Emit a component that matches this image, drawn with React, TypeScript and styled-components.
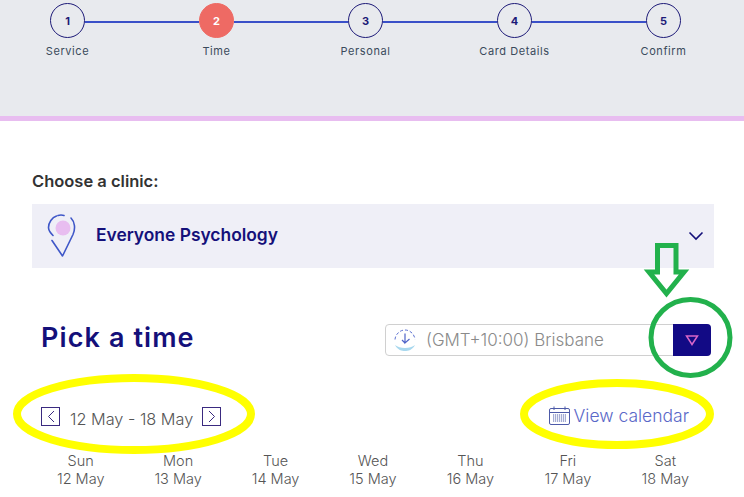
import { createGlobalStyle, styled } from 'styled-components';

const GlobalStyle = createGlobalStyle`
  html, body {
    margin: 0;
    padding: 0;
    background: #fff;
    font-family: Inter, "Liberation Sans", sans-serif;
  }
  #root {
    position: relative;
    width: 744px;
    height: 497px;
    overflow: hidden;
  }
`;

const steps = ['Service', 'Time', 'Personal', 'Card Details', 'Confirm'];
const days = [
  ['Sun', '12 May'],
  ['Mon', '13 May'],
  ['Tue', '14 May'],
  ['Wed', '15 May'],
  ['Thu', '16 May'],
  ['Fri', '17 May'],
  ['Sat', '18 May'],
];

export default function App() {
  return (
    <>
      <GlobalStyle />
      <Header>
        <Stepper>
          {steps.map((label, i) => (
            <StepGroup key={label} $last={i === steps.length - 1}>
              <Step>
                <Circle $active={i === 1}>{i + 1}</Circle>
                <StepLabel>{label}</StepLabel>
              </Step>
              {i < steps.length - 1 && <Connector />}
            </StepGroup>
          ))}
        </Stepper>
      </Header>
      <Main>
        <ClinicLabel>Choose a clinic:</ClinicLabel>
        <ClinicBar>
          <svg width="34" height="46" viewBox="0 0 34 46" fill="none">
            <circle cx="16" cy="15" r="7.5" fill="#e8bdf0" />
            <path
              d="M6 22.500c-2.500-2.500-4.500-5-4.500-8 0-5 3.500-10 8-11.500M11 2.500c2-.6 4-.6 6 0M24 5c4 4 4.500 11 2 16.500L15.500 43 5 27.500"
              stroke="#3f57c8"
              strokeWidth="1.600"
              strokeLinecap="round"
              strokeLinejoin="round"
            />
          </svg>
          <ClinicName>Everyone Psychology</ClinicName>
          <svg width="16" height="10" viewBox="0 0 16 10" fill="none">
            <path d="M1.500 1.500 8 8l6.500-6.500" stroke="#14107a" strokeWidth="1.600" />
          </svg>
        </ClinicBar>
        <TimeRow>
          <Title>Pick a time</Title>
          <ZoneSelect>
            <ZoneIcon width="26" height="26" viewBox="0 0 26 26" fill="none">
              <path d="M3 18c2.500 5 7 6 10 6s7.500-1 10-6c-2.500 2-6 3-10 3s-7.500-1-10-3z" fill="#a8d8ee" />
              <path
                d="M3 12.500C3.500 7 8 3 13 3s9.500 4 10 9.500"
                stroke="#5a6fd0"
                strokeWidth="1"
                strokeDasharray="3 2"
              />
              <path d="M13 6.500V16l4.500-4M13 16l-3-3" stroke="#4e63c8" strokeWidth="1.200" />
            </ZoneIcon>
            <ZoneText>(GMT+10:00) Brisbane</ZoneText>
            <ZoneButton>
              <svg width="14" height="11" viewBox="0 0 14 11" fill="none">
                <path d="M1.500 1h11L7 9.500z" stroke="#d866c8" strokeWidth="1.500" />
              </svg>
            </ZoneButton>
          </ZoneSelect>
        </TimeRow>
        <DateRow>
          <DateNav>
            <ArrowBox>
              <svg width="8" height="13" viewBox="0 0 8 13" fill="none">
                <path d="M7 1 1.500 6.500 7 12" stroke="#3a2a80" strokeWidth="1" />
              </svg>
            </ArrowBox>
            <DateRange>12 May - 18 May</DateRange>
            <ArrowBox>
              <svg width="8" height="13" viewBox="0 0 8 13" fill="none">
                <path d="M1 1l5.500 5.500L1 12" stroke="#3a2a80" strokeWidth="1" />
              </svg>
            </ArrowBox>
          </DateNav>
          <CalendarLink>
            <svg width="21" height="19" viewBox="0 0 21 19" fill="none">
              <rect x=".5" y="2.500" width="20" height="16" rx="1.500" stroke="#4d5aa8" />
              <path d="M.5 6.500h20M5 .5v3.500M16 .5v3.500" stroke="#4d5aa8" />
              <path
                d="M4 9h13M4 11h13M4 13h13M4 15h13"
                stroke="#4d5aa8"
                strokeWidth="1.200"
                strokeDasharray="1.200 .8"
              />
            </svg>
            <span>View calendar</span>
          </CalendarLink>
        </DateRow>
        <WeekGrid>
          {days.map(([day, date]) => (
            <DayHead key={day}>
              <span>{day}</span>
              <span>{date}</span>
            </DayHead>
          ))}
        </WeekGrid>
      </Main>
      <Annotations viewBox="0 0 744 497" fill="none">
        <ellipse cx="134" cy="414" rx="117" ry="36" stroke="#ffff00" strokeWidth="8" />
        <ellipse cx="617" cy="414" rx="93" ry="31" stroke="#ffff00" strokeWidth="8" />
        <ellipse cx="690.500" cy="337.500" rx="39.500" ry="38" stroke="#22b14c" strokeWidth="5" />
        <path d="M657.500 245.500h18.500v26.500h8L666.500 293.500 649 272h8.500z" stroke="#22b14c" strokeWidth="5" />
      </Annotations>
    </>
  );
}

const Header = styled.header`
  box-sizing: border-box;
  height: 121px;
  padding-top: 3px;
  background: #e8eaee;
  border-bottom: 5px solid #e8bdf0;
`;

const Stepper = styled.div`
  display: flex;
  padding: 0 63px 0 50px;
`;

const StepGroup = styled.div<{ $last: boolean }>`
  display: flex;
  flex: ${(p) => (p.$last ? '0 0 auto' : '1')};
`;

const Step = styled.div`
  display: flex;
  flex-direction: column;
  align-items: center;
  width: 35px;
`;

const Circle = styled.div<{ $active: boolean }>`
  box-sizing: border-box;
  flex: none;
  display: flex;
  align-items: center;
  justify-content: center;
  width: 35px;
  height: 35px;
  border-radius: 50%;
  border: 1px solid ${(p) => (p.$active ? '#ee6a64' : '#1d1a78')};
  background: ${(p) => (p.$active ? '#ee6a64' : 'transparent')};
  color: ${(p) => (p.$active ? '#fff' : '#1d1a78')};
  font-size: 11px;
  font-weight: 700;
`;

const StepLabel = styled.div`
  margin-top: 5px;
  color: #3a4a5c;
  font-size: 11px;
  line-height: 16px;
  letter-spacing: 0.6px;
  white-space: nowrap;
`;

const Connector = styled.div`
  flex: 1;
  height: 2px;
  margin-top: 18px;
  background: #3a50c8;
`;

const Main = styled.main`
  padding: 50px 30px 0 32px;
`;

const ClinicLabel = styled.div`
  color: #333;
  font-size: 16.500px;
  font-weight: 600;
  line-height: 20px;
`;

const ClinicBar = styled.div`
  display: flex;
  align-items: center;
  height: 64px;
  margin-top: 13px;
  padding: 0 10px 0 15px;
  background: #efeff7;
`;

const ClinicName = styled.div`
  flex: 1;
  margin: -4px 0 0 15px;
  color: #14107a;
  font-size: 17.400px;
  font-weight: 600;
`;

const TimeRow = styled.div`
  display: flex;
  align-items: center;
  justify-content: space-between;
  height: 32px;
  margin-top: 56px;
  padding: 0 3px 0 9px;
`;

const Title = styled.h1`
  margin: -6px 0 0;
  color: #14107a;
  font-size: 27px;
  font-weight: 600;
  letter-spacing: 1.100px;
`;

const ZoneSelect = styled.div`
  box-sizing: border-box;
  display: flex;
  align-items: center;
  width: 326px;
  height: 32px;
  border: 1px solid #d0d0d0;
  border-radius: 4px;
`;

const ZoneIcon = styled.svg`
  margin-left: 6px;
`;

const ZoneText = styled.div`
  flex: 1;
  margin-left: 8px;
  color: #8a8a8a;
  font-size: 17px;
  font-weight: 300;
`;

const ZoneButton = styled.div`
  display: flex;
  align-items: center;
  justify-content: center;
  align-self: stretch;
  width: 38px;
  margin: -1px;
  background: #120a85;
  border-radius: 0 4px 4px 0;
`;

const DateRow = styled.div`
  display: flex;
  align-items: center;
  justify-content: space-between;
  margin-top: 46px;
  padding: 0 25px 0 9px;
`;

const DateNav = styled.div`
  display: flex;
  align-items: center;
  gap: 9px;
`;

const ArrowBox = styled.div`
  box-sizing: border-box;
  display: flex;
  align-items: center;
  justify-content: center;
  width: 19px;
  height: 19px;
  margin-top: 2px;
  border: 1px solid #3a2a80;
`;

const DateRange = styled.div`
  margin: 7px 0 0 1px;
  color: #555;
  font-size: 16.300px;
  font-weight: 300;
`;

const CalendarLink = styled.div`
  display: flex;
  align-items: center;
  gap: 4px;
  color: #5a68c8;
  font-size: 17.500px;
  font-weight: 300;
`;

const WeekGrid = styled.div`
  display: grid;
  grid-template-columns: repeat(7, 1fr);
  margin-top: 23px;
`;

const DayHead = styled.div`
  display: flex;
  flex-direction: column;
  align-items: center;
  color: #555;
  font-size: 14.500px;
  font-weight: 300;
  line-height: 18px;
`;

const Annotations = styled.svg`
  position: absolute;
  inset: 0;
  width: 744px;
  height: 497px;
  pointer-events: none;
`;
